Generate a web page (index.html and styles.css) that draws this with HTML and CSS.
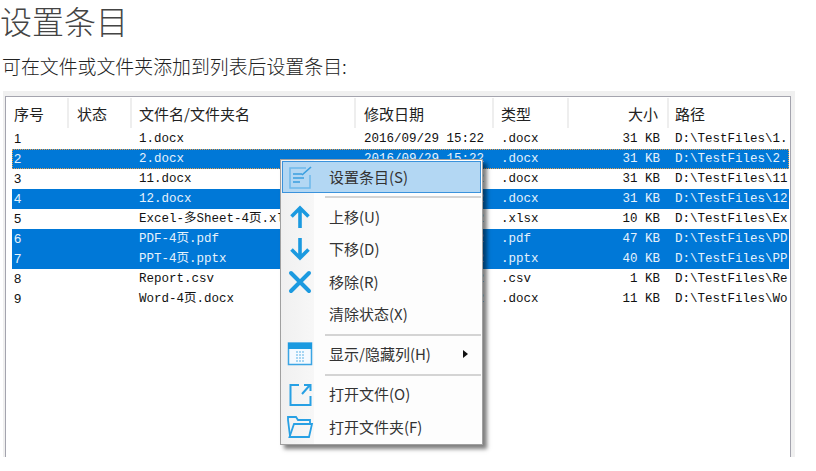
FILE: index.html
```html
<!DOCTYPE html>
<html lang="zh">
<head>
<meta charset="utf-8">
<title>设置条目</title>
<link rel="stylesheet" href="styles.css">
</head>
<body>
<h1 class="title">设置条目</h1>
<p class="lead">可在文件或文件夹添加到列表后设置条目:</p>
<div class="frame">
  <div class="panel">
    <div class="row head">
      <div class="c1">序号</div><div class="c2">状态</div><div class="c3">文件名/文件夹名</div><div class="c4">修改日期</div><div class="c5">类型</div><div class="c6">大小</div><div class="c7">路径</div>
    </div>
    <div class="row"><div class="c1">1</div><div class="c2"></div><div class="c3">1.docx</div><div class="c4">2016/09/29 15:22</div><div class="c5">.docx</div><div class="c6">31 KB</div><div class="c7">D:\TestFiles\1.</div></div>
    <div class="row sel focus"><div class="c1">2</div><div class="c2"></div><div class="c3">2.docx</div><div class="c4">2016/09/29 15:22</div><div class="c5">.docx</div><div class="c6">31 KB</div><div class="c7">D:\TestFiles\2.</div></div>
    <div class="row"><div class="c1">3</div><div class="c2"></div><div class="c3">11.docx</div><div class="c4">2016/09/29 15:22</div><div class="c5">.docx</div><div class="c6">31 KB</div><div class="c7">D:\TestFiles\11</div></div>
    <div class="row sel"><div class="c1">4</div><div class="c2"></div><div class="c3">12.docx</div><div class="c4">2016/09/29 15:22</div><div class="c5">.docx</div><div class="c6">31 KB</div><div class="c7">D:\TestFiles\12</div></div>
    <div class="row"><div class="c1">5</div><div class="c2"></div><div class="c3">Excel-多Sheet-4页.xlsx</div><div class="c4">2016/09/29 15:22</div><div class="c5">.xlsx</div><div class="c6">10 KB</div><div class="c7">D:\TestFiles\Ex</div></div>
    <div class="row sel"><div class="c1">6</div><div class="c2"></div><div class="c3">PDF-4页.pdf</div><div class="c4">2016/09/29 15:22</div><div class="c5">.pdf</div><div class="c6">47 KB</div><div class="c7">D:\TestFiles\PD</div></div>
    <div class="row sel"><div class="c1">7</div><div class="c2"></div><div class="c3">PPT-4页.pptx</div><div class="c4">2016/09/29 15:22</div><div class="c5">.pptx</div><div class="c6">40 KB</div><div class="c7">D:\TestFiles\PP</div></div>
    <div class="row"><div class="c1">8</div><div class="c2"></div><div class="c3">Report.csv</div><div class="c4">2016/09/29 15:22</div><div class="c5">.csv</div><div class="c6">1 KB</div><div class="c7">D:\TestFiles\Re</div></div>
    <div class="row"><div class="c1">9</div><div class="c2"></div><div class="c3">Word-4页.docx</div><div class="c4">2016/09/29 15:22</div><div class="c5">.docx</div><div class="c6">11 KB</div><div class="c7">D:\TestFiles\Wo</div></div>
  </div>
  <div class="menu">
    <div class="item active">
      <span class="ico"><svg width="26" height="26" viewBox="0 0 26 26" fill="none" stroke="#6db9ec" stroke-width="1.5"><path d="M19 4H3v20h20V11"/><path d="M6 10h9M6 14h11M6 18h7" stroke="#3a9fe0"/><path d="M15 11 24 3" stroke="#3a9fe0" stroke-width="1.6"/></svg></span>
      <span class="label">设置条目(S)</span>
    </div>
    <div class="sep"></div>
    <div class="item">
      <span class="ico"><svg width="26" height="26" viewBox="0 0 26 26" fill="none" stroke="#1b9ae0" stroke-width="3.6"><path d="M13 24V4M4.5 12.5 13 4l8.500 8.500"/></svg></span>
      <span class="label">上移(U)</span>
    </div>
    <div class="item">
      <span class="ico"><svg width="26" height="26" viewBox="0 0 26 26" fill="none" stroke="#1b9ae0" stroke-width="3.6"><path d="M13 2v20M4.500 13.500 13 22l8.500-8.500"/></svg></span>
      <span class="label">下移(D)</span>
    </div>
    <div class="item">
      <span class="ico"><svg width="26" height="26" viewBox="0 0 26 26" fill="none" stroke="#1b9ae0" stroke-width="4" stroke-linecap="round"><path d="M4 4l18 18M22 4 4 22"/></svg></span>
      <span class="label">移除(R)</span>
    </div>
    <div class="item">
      <span class="ico"></span>
      <span class="label">清除状态(X)</span>
    </div>
    <div class="sep"></div>
    <div class="item short">
      <span class="ico"><svg width="26" height="26" viewBox="0 0 26 26" fill="none"><path d="M1.500 2h23v21.500h-23z" fill="#f4faff" stroke="#3ba5e4" stroke-width="1.500"/><path d="M1 2h24v6H1z" fill="#1b9ae0"/><path d="M9 11h8M9 14h8M9 17h8M9 20h8" stroke="#8ccaf0" stroke-width="1.500" stroke-dasharray="2 1"/></svg></span>
      <span class="label">显示/隐藏列(H)</span>
      <span class="more"></span>
    </div>
    <div class="sep"></div>
    <div class="item lower">
      <span class="ico"><svg width="26" height="26" viewBox="0 0 26 26" fill="none" stroke="#27a0e4" stroke-width="2"><path d="M12 4H3.500v20h20V15"/><path d="M15 13 23 4M17 4h6.500v6"/></svg></span>
      <span class="label">打开文件(O)</span>
    </div>
    <div class="item lower">
      <span class="ico"><svg width="28" height="26" viewBox="0 0 28 26" fill="none" stroke="#27a0e4" stroke-width="1.800"><path d="M4 22 2 6V3h8l2 3h12v3"/><path d="M8 10h18l-3 13H3.500z"/></svg></span>
      <span class="label">打开文件夹(F)</span>
    </div>
  </div>
</div>
</body>
</html>
```
FILE: styles.css
```css
* {
  box-sizing: border-box;
}

body {
  margin: 0;
  background: #fff;
  color: #333;
  font-family: "Noto Sans CJK SC", "Liberation Sans", sans-serif;
}

.title {
  margin: 0;
  font-size: 32px;
  line-height: 40px;
  font-weight: 300;
  color: #444;
}

.lead {
  margin: 14px 0 0;
  padding-left: 2px;
  font-size: 18.9px;
  line-height: 24px;
  font-weight: 300;
  color: #222;
}

.frame {
  position: relative;
  width: 792px;
  height: 366px;
  margin: 13px 0 0 3px;
  padding: 5px 4px 0 2px;
  background: #f0f0f0;
}

.panel {
  height: 100%;
  padding: 0 0 0 6px;
  background: #fff;
  border: 1px solid #a4a4ae;
  border-bottom: 0;
  overflow: hidden;
  color: #111;
  font-family: "Liberation Mono", "Noto Sans CJK SC", monospace;
  font-size: 12.5px;
}

.row {
  display: grid;
  grid-template-columns: 57px 63px 224px 138px 75px 100px 120px;
  width: 777px;
  height: 20px;
  line-height: 20px;
  white-space: nowrap;
}

.row > div {
  overflow: hidden;
}

.head {
  height: 32px;
  line-height: 32px;
  color: #222;
  font-family: "Noto Sans CJK SC", sans-serif;
  font-size: 15px;
}

.head > div {
  height: 30px;
  margin-top: 1px;
  line-height: 32px;
  border-right: 2px solid #eee;
}

.head .c7 {
  border-right: 0;
}

.c1 {
  padding-left: 2px;
  font-family: "Liberation Sans", sans-serif;
  font-size: 13px;
}

.head .c1 {
  font-family: "Noto Sans CJK SC", sans-serif;
  font-size: 15px;
}

.c2 {
  padding-left: 8px;
}

.c3 {
  padding-left: 7px;
}

.c4 {
  padding-left: 8px;
}

.c5 {
  padding-left: 7px;
}

.c6 {
  padding-right: 9px;
  text-align: right;
}

.c7 {
  padding-left: 6px;
}

.sel {
  background: #0078d7;
  color: #e6f2fc;
}

.focus {
  outline: 1px dotted #e8a050;
  outline-offset: -1px;
}

.menu {
  position: absolute;
  left: 277px;
  top: 68px;
  width: 203px;
  height: 286px;
  padding: 1px;
  border: 1px solid #a0a0a0;
  background: linear-gradient(90deg, #f0f0f0 0, #f7f7f7 33px, #fdfdfd 33px, #fdfdfd 100%);
  box-shadow: 4px 4px 4px rgba(0, 0, 0, 0.5);
  color: #333;
  font-family: "Noto Sans CJK SC", "Liberation Sans", sans-serif;
  font-size: 15px;
}

.item {
  display: flex;
  align-items: center;
  height: 32.5px;
  padding-bottom: 1px;
  border: 1px solid transparent;
}

.item.short {
  height: 32px;
  padding-bottom: 2px;
}

.item.lower {
  padding-bottom: 2px;
}

.item.active {
  height: 32px;
  padding-bottom: 0;
  background: #b3d7f3;
  border-color: #3a92dc;
}

.ico {
  display: flex;
  justify-content: center;
  align-items: center;
  flex: none;
  width: 33px;
  height: 26px;
  margin-right: 13px;
}

.label {
  flex: 1;
  line-height: 20px;
  white-space: nowrap;
}

.more {
  flex: none;
  width: 0;
  height: 0;
  margin-right: 12px;
  border-left: 5px solid #111;
  border-top: 4.500px solid transparent;
  border-bottom: 4.500px solid transparent;
}

.sep {
  height: 2px;
  margin: 3px 0 3px 43px;
  background: #d4d4d4;
}
```
